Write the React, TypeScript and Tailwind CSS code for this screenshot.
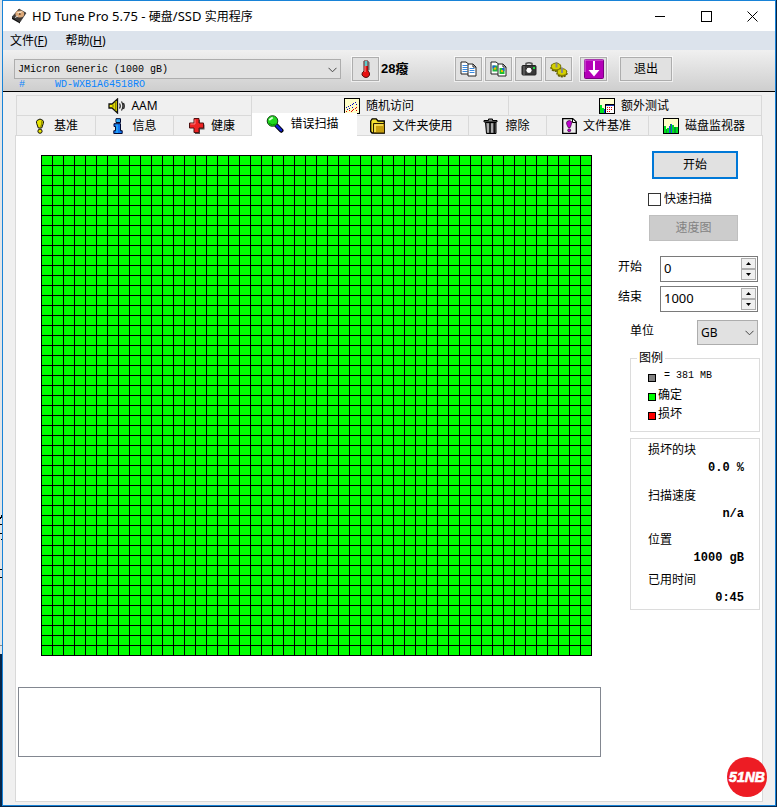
import React, { useState } from 'react';

const ExitIcon: React.FC = () => (
    <svg width="11" height="11" viewBox="0 0 11 11" stroke="#000" fill="none">
        <path d="M.5.5l10 10M10.5.5l-10 10" />
    </svg>
);

const DiskIcon: React.FC = () => (
    <svg width="16" height="16" viewBox="0 0 16 16">
        <path d="M1 9L8 1l7 4-6 9z" fill="#3d3a38" stroke="#222" strokeWidth=".6" />
        <path d="M1 9l8 5v1.5L1 11z" fill="#111" />
        <ellipse cx="8.8" cy="6" rx="4.4" ry="3.6" fill="#dca878" />
        <path d="M5.5 4.5L9 6l2.5-3" fill="#f5e3c8" />
        <circle cx="8.8" cy="6" r="1" fill="#6b4a2c" />
        <path d="M4 9.5l3-1.5" stroke="#ddd" />
    </svg>
);

const SpeakerIcon: React.FC = () => (
    <svg width="17" height="16" viewBox="0 0 17 16">
        <path d="M1 6h3l5.500-5v14L4 10H1z" fill="#f0e800" stroke="#111" strokeWidth="1.300" />
        <path d="M5 6.500v3M7.500 3.500v9" stroke="#8a8600" strokeWidth="1.300" />
        <path d="M11.500 5.500q1.500 2.500 0 5M13.500 3.500q2.800 4.500 0 9M15.500 5q1.600 3 0 6" stroke="#222" fill="none" strokeWidth="1.200" />
    </svg>
);

const ScatterIcon: React.FC = () => (
    <svg width="16" height="16" viewBox="0 0 16 16" shapeRendering="crispEdges">
        <rect x=".5" y=".5" width="15" height="15" fill="#ffffc8" stroke="#000" />
        <path d="M2 9h1v1H2zM4 8h1v1H4zM6 7h1v1H6zM5 10h1v1H5zM8 6h1v1H8zM9 5h1v1H9zM11 4h1v1h-1zM12 6h1v1h-1zM3 11h1v1H3zM8 9h1v1H8z" fill="#0000c8" />
        <path d="M2 13h1v1H2zM5 12h1v1H5zM7 13h1v1H7zM9 11h1v1H9zM12 9h1v1h-1zM12 12h1v1h-1zM11 10h1v1h-1zM8 12h1v1H8z" fill="#e00000" />
    </svg>
);

const ExtraIcon: React.FC = () => (
    <svg width="16" height="16" viewBox="0 0 16 16" shapeRendering="crispEdges">
        <rect x=".5" y=".5" width="15" height="15" fill="#ffffd0" stroke="#000" />
        <path d="M1 7h2v3h2v2h2v3H1z" fill="#00e020" />
        <path d="M5 11h2v4H5z" fill="#1030e0" />
        <rect x="6.5" y="6.5" width="9" height="9" fill="#fff" stroke="#000" />
        <path d="M7 7h8v1H7z" fill="#1a30b0" />
        <path d="M8 9h1v1H8zM10 9h1v1h-1zM12 9h1v1h-1zM8 11h1v1H8zM10 11h1v1h-1zM12 11h1v1h-1zM8 13h1v1H8zM10 13h1v1h-1z" fill="#e00000" />
    </svg>
);

const BangIcon: React.FC = () => (
    <svg width="16" height="16" viewBox="0 0 16 16">
        <path d="M5 2.500Q8-.5 11 2.500q1 1 .3 3L9.700 10H6.300L4.700 5.500Q4 3.500 5 2.500z" fill="#e8e400" stroke="#111" />
        <path d="M9.800 3q.6 2-1 6" stroke="#8a8600" fill="none" strokeWidth="1.400" />
        <circle cx="8" cy="13.200" r="2.100" fill="#e8e400" stroke="#111" />
    </svg>
);

const InfoIcon: React.FC = () => (
    <svg width="16" height="16" viewBox="0 0 16 16">
        <path d="M6 .7h4.500v3.800H6z" fill="#2aa8ff" stroke="#000830" />
        <path d="M4 5.700h6.500v7h1.700v2.800H3.800v-2.800h1.700V8.500H4z" fill="#1478f0" stroke="#000830" />
        <path d="M7 6.500V15M7 1.500v2" stroke="#30c8ff" />
    </svg>
);

const HealthIcon: React.FC = () => (
    <svg width="17" height="17" viewBox="0 0 17 17">
        <path d="M7 3h5v4.500h4.500v5H12V17H7z" fill="#555" />
        <path d="M6 1.500h5V6h4.500v5H11v4.500H6V11H1.500V6H6z" fill="#ee2222" stroke="#501010" />
        <path d="M7 2.500v4.500H2.500" stroke="#ff8080" fill="none" />
    </svg>
);

const ScanIcon: React.FC = () => (
    <svg width="18" height="18" viewBox="0 0 18 18">
        <path d="M10.500 10.500l4.800 5" stroke="#000" strokeWidth="4.500" strokeLinecap="round" />
        <path d="M10.500 10.500l4.500 4.700" stroke="#1020d0" strokeWidth="2.600" strokeLinecap="round" />
        <circle cx="6.500" cy="6" r="5.300" fill="#20d820" stroke="#104010" />
        <path d="M3.200 5l3.500-2.500" stroke="#d8ffd8" strokeWidth="1.800" />
        <path d="M3 8q3 3.500 6.500 1" stroke="#009000" fill="none" />
    </svg>
);

const FolderIcon: React.FC = () => (
    <svg width="16" height="16" viewBox="0 0 16 16">
        <path d="M.7 3L2.200.8h4L8 3h6.300v12H2L.7 13.500z" fill="#f4e030" stroke="#000" strokeWidth="1.300" />
        <path d="M3.500 5.500h11v9.500h-11z" fill="#c8a010" stroke="#2a2000" />
        <path d="M5 14V7h8" stroke="#ffe860" fill="none" strokeWidth="1.600" />
    </svg>
);

const TrashIcon: React.FC = () => (
    <svg width="16" height="16" viewBox="0 0 16 16">
        <path d="M5.500 1h4v1.500H14V4H1V2.500h4.500z" fill="#888" stroke="#000" />
        <path d="M2.500 4.500h10.500v11h-9.500z" fill="#777" stroke="#000" />
        <path d="M5 5.500v9M9 5.500v9" stroke="#e0e0e0" />
        <path d="M7 5v10M11.300 5v10" stroke="#111" strokeWidth="1.500" />
    </svg>
);

const FileBenchIcon: React.FC = () => (
    <svg width="15" height="16" viewBox="0 0 15 16">
        <path d="M.7.7h10L14.300 4v11.300H.7z" fill="#eee" stroke="#000" strokeWidth="1.300" />
        <path d="M10.500 1v3.500H14" fill="#fff" stroke="#000" />
        <path d="M5 3.500q2.500-2 4.500 0 .6 1-.2 3L8.300 9.500H6.200L4.800 6.500q-.6-2 .2-3z" fill="#c000d0" stroke="#300030" strokeWidth=".7" />
        <circle cx="7.200" cy="12.300" r="1.500" fill="#c000d0" stroke="#300030" strokeWidth=".7" />
    </svg>
);

const MonitorIcon: React.FC = () => (
    <svg width="16" height="16" viewBox="0 0 16 16" shapeRendering="crispEdges">
        <rect x=".5" y=".5" width="15" height="15" fill="#ffffc8" stroke="#000" />
        <path d="M1 8h2v7H1zM4 10h2v5H4zM9 7h2v8H9zM13 9h2v6h-2z" fill="#00e020" />
        <path d="M3 11h1v4H3zM7 6h1v9H7zM11 9h2v6h-2z" fill="#00a030" />
        <path d="M6 8h1v7H6zM8 6h1v9H8z" fill="#2050e0" />
    </svg>
);

const ThermoIcon: React.FC = () => (
    <svg width="12" height="18" viewBox="0 0 12 18">
        <path d="M4 1h4v10q2 1.500 1.500 4-1 2.500-3.500 2.500T2 15q-.5-2.500 2-4z" fill="#e81010" stroke="#501010" />
        <path d="M4.500 1h3v5h-3z" fill="#5ccaca" />
        <path d="M5 6v6" stroke="#ff9090" />
        <path d="M8 3h2M8 5h2M8 7h2M8 9h2" stroke="#444" strokeWidth=".8" />
    </svg>
);

const CopyTextIcon: React.FC = () => (
    <svg width="17" height="16" viewBox="0 0 17 16">
        <path d="M1 1h5l2.500 2v10H1z" fill="#fff" stroke="#222" />
        <path d="M2.500 4.500h5M2.500 6.500h5M2.500 8.500h5M2.500 10.500h5" stroke="#3a8ae0" />
        <path d="M8 3h5l3 3v9H8z" fill="#fff" stroke="#222" />
        <path d="M13 3v3h3" fill="none" stroke="#222" />
        <path d="M9.500 7.500h5M9.500 9.500h5M9.500 11.500h5" stroke="#3a8ae0" />
    </svg>
);

const CopyImageIcon: React.FC = () => (
    <svg width="17" height="16" viewBox="0 0 17 16">
        <path d="M1 1h5l2.500 2v10H1z" fill="#fff" stroke="#222" />
        <path d="M2.500 4.500h5v6h-5z" fill="#20b840" />
        <path d="M2.500 4.500h3v3h-3z" fill="#2060d0" />
        <circle cx="5" cy="7.500" r="1.200" fill="#f0c000" />
        <path d="M8 3h5l3 3v9H8z" fill="#fff" stroke="#222" />
        <path d="M13 3v3h3" fill="none" stroke="#222" />
        <path d="M9.500 7h5v6h-5z" fill="#18c030" />
        <path d="M12 7h2.500v3H12z" fill="#2060d0" />
        <circle cx="12" cy="10" r="1.200" fill="#f0c000" />
    </svg>
);

const CameraIcon: React.FC = () => (
    <svg width="16" height="14" viewBox="0 0 16 14">
        <path d="M5 3.500V1.500q3-1.500 6 0v2" fill="none" stroke="#555" strokeWidth="1.500" />
        <rect x="1" y="3.500" width="14" height="9.500" rx="1" fill="#383838" stroke="#222" />
        <path d="M3 4v9" stroke="#777" />
        <circle cx="8" cy="8.300" r="3.200" fill="#fff" stroke="#222" />
        <path d="M12 5h2v2h-2z" fill="#20e040" />
    </svg>
);

const GearsIcon: React.FC = () => (
    <svg width="18" height="17" viewBox="0 0 18 17">
        <ellipse cx="6" cy="6.500" rx="5" ry="3.800" fill="#8a8600" stroke="#5e5a00" strokeWidth="1.400" strokeDasharray="2 1" />
        <ellipse cx="6" cy="5.500" rx="4.600" ry="3.300" fill="#d4d000" stroke="#7a7600" strokeWidth=".8" />
        <path d="M6.500 1v5.500" stroke="#888" strokeWidth="2" />
        <ellipse cx="12" cy="12" rx="5" ry="3.800" fill="#8a8600" stroke="#5e5a00" strokeWidth="1.400" strokeDasharray="2 1" />
        <ellipse cx="12" cy="11" rx="4.600" ry="3.300" fill="#d4d000" stroke="#7a7600" strokeWidth=".8" />
        <path d="M12 6.500V12" stroke="#888" strokeWidth="2" />
    </svg>
);

const SaveIcon: React.FC = () => (
    <svg width="20" height="20" viewBox="0 0 20 20">
        <rect x=".5" y=".5" width="19" height="19" rx="1" fill="#b400b8" stroke="#780080" />
        <path d="M1 13V1h18" stroke="#d870dc" fill="none" />
        <path d="M10 2v12" stroke="#fff" strokeWidth="2" />
        <path d="M4.500 11h11L10 17.500z" fill="#fff" />
    </svg>
);

const Chevron: React.FC<{ className: string }> = ({ className }) => (
    <svg width="9" height="6" viewBox="0 0 9 6" className={className}>
        <path d="M.5.8l4 4 4-4" fill="none" stroke="#444" />
    </svg>
);

const topTabs = [
    { label: 'AAM', icon: <SpeakerIcon /> },
    { label: '随机访问', icon: <ScatterIcon /> },
    { label: '额外测试', icon: <ExtraIcon /> },
];

const bottomTabs = [
    { label: '基准', icon: <BangIcon /> },
    { label: '信息', icon: <InfoIcon /> },
    { label: '健康', icon: <HealthIcon /> },
    { label: '错误扫描', icon: <ScanIcon /> },
    { label: '文件夹使用', icon: <FolderIcon /> },
    { label: '擦除', icon: <TrashIcon /> },
    { label: '文件基准', icon: <FileBenchIcon /> },
    { label: '磁盘监视器', icon: <MonitorIcon /> },
];

const tools = [
    { label: 'Copy text', icon: <CopyTextIcon /> },
    { label: 'Copy image', icon: <CopyImageIcon /> },
    { label: 'Screenshot', icon: <CameraIcon /> },
    { label: 'Options', icon: <GearsIcon /> },
];

const stats = [
    { label: '损坏的块', value: '0.0 %', gap: 'mt-0' },
    { label: '扫描速度', value: 'n/a', gap: 'mt-2.5' },
    { label: '位置', value: '1000 gB', gap: 'mt-2' },
    { label: '已用时间', value: '0:45', gap: 'mt-1' },
];

const toolButton = 'flex h-6 w-[27px] items-center justify-center border border-[#adadad] bg-[#e1e1e1] outline outline-white/60';

const SpinBox: React.FC<{ id: string; label: string; initial: string }> = ({ id, label, initial }) => {
    const [value, setValue] = useState(initial);
    const step = (n: number) => setValue(String(Math.max(0, Number(value) + n)));

    return (
        <div className="flex items-start pr-0.5">
            <label htmlFor={id} className="w-[42px] pt-[3px]">{label}</label>
            <div className="flex h-[26px] min-w-0 flex-1 border border-[#7a7a7a] bg-white">
                <input
                    id={id}
                    value={value}
                    onChange={(e) => setValue(e.target.value)}
                    className="min-w-0 flex-1 px-[3px] pb-0.5 text-[13px] outline-none"
                />
                <div className="flex w-[17px] flex-col p-px">
                    <button aria-label={`${label} +`} onClick={() => step(1)} className="flex flex-1 items-center justify-center border border-[#adadad] bg-[#f0f0f0]">
                        <svg width="5" height="3" viewBox="0 0 5 3"><path d="M0 3L2.500 0 5 3z" /></svg>
                    </button>
                    <button aria-label={`${label} -`} onClick={() => step(-1)} className="flex flex-1 items-center justify-center border border-[#adadad] bg-[#f0f0f0]">
                        <svg width="5" height="3" viewBox="0 0 5 3"><path d="M0 0l2.500 3L5 0z" /></svg>
                    </button>
                </div>
            </div>
        </div>
    );
};

export default function App() {
    const [active, setActive] = useState('错误扫描');

    return (
        <div className="flex min-h-screen bg-[#06264a] font-['Noto_Sans','Noto_Sans_CJK_SC',sans-serif] text-xs leading-4 text-black">
            {/* Desktop edge left of the window */}
            <div className="flex w-0.5 flex-col">
                <div className="h-[654px] bg-[#e3e5e7]">
                    <svg width="2" height="654" viewBox="0 0 2 654" shapeRendering="crispEdges">
                        <path d="M0 517h1v2H0zM1 515h1v3H1zM0 524h2v1H0zM0 533h2v1H0zM1 539h1v1H1zM0 569h2v1H0zM0 577h2v1H0z" />
                        <path d="M0 645h2v1H0z" fill="#888" />
                    </svg>
                </div>
            </div>

            <div className="relative mr-px mb-px flex min-w-0 flex-1 flex-col border border-[#1883d7] bg-[#f0f0f0]">
                {/* Title bar */}
                <header className="flex h-[30px] items-center bg-white pl-2">
                    <DiskIcon />
                    <h1 className="ml-[5px] flex-1 text-[13px]">
                        HD Tune Pro 5.75 - <span className="text-xs">硬盘</span>/SSD <span className="text-xs">实用程序</span>
                    </h1>
                    <button aria-label="Minimize" className="flex h-full w-[46px] items-center justify-center">
                        <svg width="10" height="1"><path d="M0 0h10v1H0z" /></svg>
                    </button>
                    <button aria-label="Maximize" className="flex h-full w-[46px] items-center justify-center">
                        <svg width="11" height="11" viewBox="0 0 11 11"><rect x=".5" y=".5" width="10" height="10" fill="none" stroke="#000" /></svg>
                    </button>
                    <button aria-label="Close" className="flex h-full w-[46px] items-center justify-center">
                        <ExitIcon />
                    </button>
                </header>

                <nav className="flex h-[19px] items-center gap-[18px] bg-[#dce3ec] pt-px pl-[7px]">
                    <button>文件(<u>F</u>)</button>
                    <button>帮助(<u>H</u>)</button>
                </nav>

                {/* Toolbar */}
                <div className="flex h-[42px] items-start border-b border-black bg-linear-to-b from-[#f0f0f0] to-[#cecece] pt-[7px] pl-[11px]">
                    <div className="w-[327px] pt-0.5 font-['Liberation_Mono',monospace] text-[10px]">
                        <div className="relative">
                            <select aria-label="Drive" className="block h-5 w-full appearance-none border border-[#adadad] bg-[#e1e1e1] pt-px pl-[3px]">
                                <option>JMicron Generic (1000 gB)</option>
                            </select>
                            <Chevron className="pointer-events-none absolute top-2 right-1" />
                        </div>
                        <p className="flex gap-[30px] pl-[5px] leading-[11px] text-[#0a84ff]">
                            <span>#</span>
                            <span>WD-WXB1A64518RO</span>
                        </p>
                    </div>
                    <button aria-label="Temperature" className={`ml-[11px] ${toolButton}`}><ThermoIcon /></button>
                    <span className="ml-0.5 w-[74px] text-[13px] leading-6 font-bold font-['Liberation_Sans','Noto_Sans_CJK_SC',sans-serif]">28癈</span>
                    <div className="flex gap-[3px]">
                        {tools.map((t) => (
                            <button key={t.label} aria-label={t.label} className={toolButton}>{t.icon}</button>
                        ))}
                    </div>
                    <button aria-label="Save" className={`ml-2 ${toolButton}`}><SaveIcon /></button>
                    <button className="ml-[13px] h-6 w-[52px] border border-[#adadad] bg-[#e1e1e1] outline outline-white/60">退出</button>
                </div>

                <main className="flex flex-1 flex-col pt-[3px] pr-3 pb-[3px] pl-3">
                    {/* Two rows of tabs */}
                    <div role="tablist" className="mr-px ml-px border-l border-[#d9d9d9]">
                        <div className="grid grid-cols-[235fr_257fr_253fr]">
                            {topTabs.map((t) => (
                                <button key={t.label} role="tab" aria-selected={active === t.label} onClick={() => setActive(t.label)} className="flex h-5 items-center justify-center gap-1.5 border-t border-r border-[#d9d9d9] pr-0.5">
                                    {t.icon}
                                    {t.label}
                                </button>
                            ))}
                        </div>
                        <div className="grid grid-cols-[79fr_78fr_78fr_105fr_112fr_78fr_102fr_113fr]">
                            {bottomTabs.map((t) => (
                                <button
                                    key={t.label}
                                    role="tab"
                                    aria-selected={active === t.label}
                                    onClick={() => setActive(t.label)}
                                    className={active === t.label
                                        ? 'relative -mt-0.5 -mb-px flex h-[23px] items-center justify-center gap-1.5 bg-white pr-1 pb-0.5'
                                        : 'flex h-5 items-center justify-center gap-1.5 border-t border-r border-[#d9d9d9] pr-0.5'}
                                >
                                    {t.icon}
                                    {t.label}
                                </button>
                            ))}
                        </div>
                    </div>

                    <section className="flex flex-1 items-start border border-[#d9d9d9] bg-white pr-0.5 pl-0.5">
                        <div className="min-w-0 flex-1 pt-[19px]">
                            {/* 50 x 50 blocks of the surface scan */}
                            <svg width="551" height="501" viewBox="0 0 551 501" shapeRendering="crispEdges" className="ml-[23px] block">
                                <defs>
                                    <pattern id="block" width="11" height="10" patternUnits="userSpaceOnUse">
                                        <rect width="11" height="10" fill="#000" />
                                        <rect x="1" y="1" width="10" height="9" fill="#0f0" />
                                    </pattern>
                                </defs>
                                <rect width="551" height="501" fill="url(#block)" />
                                <path d="M550 0h1v501H0v-1h550z" />
                            </svg>
                            <textarea readOnly aria-label="Log" className="mt-[31px] block h-[70px] w-full resize-none border border-[#828790]" />
                        </div>

                        <aside className="ml-[17px] w-[142px] pt-[15px]">
                            <button className="ml-[34px] block h-7 w-[86px] border-2 border-[#0078d7] bg-[#e1e1e1]">开始</button>
                            <label className="mt-3 ml-[30px] flex items-center gap-[3px]">
                                <input type="checkbox" className="size-[13px] appearance-none border border-[#333] bg-white checked:bg-[#0078d7]" />
                                快速扫描
                            </label>
                            <button disabled className="mt-2 ml-[31px] block h-[26px] w-[89px] border border-[#bfbfbf] bg-[#cccccc] text-[#838383]">速度图</button>

                            <div className="mt-[15px] flex flex-col gap-1">
                                <SpinBox id="start" label="开始" initial="0" />
                                <SpinBox id="end" label="结束" initial="1000" />
                            </div>

                            <div className="mt-2 flex items-start justify-between pr-0.5 pl-3">
                                <label htmlFor="unit" className="pt-[3px]">单位</label>
                                <div className="relative">
                                    <select id="unit" className="block h-[25px] w-[61px] appearance-none border border-[#adadad] bg-[#e1e1e1] pl-[3px]">
                                        <option>GB</option>
                                        <option>MB</option>
                                    </select>
                                    <Chevron className="pointer-events-none absolute top-2.5 right-1" />
                                </div>
                            </div>

                            <fieldset className="mt-[5px] ml-3 border border-[#dcdcdc] pb-2 pl-[17px] leading-[19px]">
                                <legend className="-ml-[11px] px-0.5 leading-4">图例</legend>
                                <div className="flex items-center">
                                    <span className="mt-1 size-2 border border-black bg-[#808080]" />
                                    <span className="ml-2 font-['Liberation_Mono',monospace] text-[10px]">= 381 MB</span>
                                </div>
                                <div className="flex items-center gap-0.5">
                                    <span className="mt-1 size-2 border border-black bg-[#00ff00]" />
                                    确定
                                </div>
                                <div className="flex items-center gap-0.5">
                                    <span className="mt-1 size-2 border border-black bg-[#ff0000]" />
                                    损坏
                                </div>
                            </fieldset>

                            <dl className="mt-1.5 ml-3 h-[172px] border border-[#dcdcdc] pt-0.5 pr-[15px] pl-[17px] leading-[17px]">
                                {stats.map((s) => (
                                    <div key={s.label} className={s.gap}>
                                        <dt>{s.label}</dt>
                                        <dd className="pt-0.5 text-right font-['Liberation_Mono',monospace] font-bold">{s.value}</dd>
                                    </div>
                                ))}
                            </dl>
                        </aside>
                    </section>
                </main>

                {/* Site badge */}
                <svg width="40" height="40" viewBox="0 0 40 40" className="absolute right-2 bottom-2">
                    <circle cx="20" cy="20" r="20" fill="#ed1c24" />
                    <text x="20" y="25" textAnchor="middle" fill="#fff" stroke="#fff" strokeWidth=".6" className="font-['Liberation_Sans',sans-serif] text-[14px] font-bold italic">51NB</text>
                </svg>
            </div>
        </div>
    );
}
